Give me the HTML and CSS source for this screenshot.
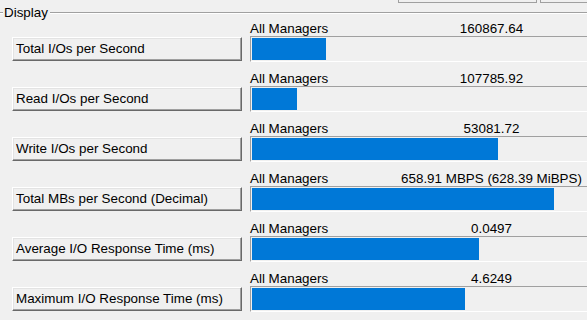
FILE: index.html
```html
<!DOCTYPE html>
<html>
<head>
<meta charset="utf-8">
<link rel="stylesheet" href="styles.css">
</head>
<body>
<div class="topstrip">
  <div class="tbtn tbtn-a"></div>
  <div class="tbtn tbtn-b"></div>
</div>
<div class="group">
  <div class="legend">
    <div class="etch etch-left"></div>
    <span class="legend-text">Display</span>
    <div class="etch etch-right"></div>
  </div>
  <div class="rows">
    <div class="row">
      <div class="btn">Total I/Os per Second</div>
      <div class="meter">
        <div class="caption"><span class="name">All Managers</span><span class="value">160867.64</span></div>
        <div class="bar"><div class="fill" style="width:74px"></div></div>
      </div>
    </div>
    <div class="row">
      <div class="btn">Read I/Os per Second</div>
      <div class="meter">
        <div class="caption"><span class="name">All Managers</span><span class="value">107785.92</span></div>
        <div class="bar"><div class="fill" style="width:45px"></div></div>
      </div>
    </div>
    <div class="row">
      <div class="btn">Write I/Os per Second</div>
      <div class="meter">
        <div class="caption"><span class="name">All Managers</span><span class="value">53081.72</span></div>
        <div class="bar"><div class="fill" style="width:246px"></div></div>
      </div>
    </div>
    <div class="row">
      <div class="btn">Total MBs per Second (Decimal)</div>
      <div class="meter">
        <div class="caption"><span class="name">All Managers</span><span class="value">658.91 MBPS (628.39 MiBPS)</span></div>
        <div class="bar"><div class="fill" style="width:302px"></div></div>
      </div>
    </div>
    <div class="row">
      <div class="btn">Average I/O Response Time (ms)</div>
      <div class="meter">
        <div class="caption"><span class="name">All Managers</span><span class="value">0.0497</span></div>
        <div class="bar"><div class="fill" style="width:227px"></div></div>
      </div>
    </div>
    <div class="row">
      <div class="btn">Maximum I/O Response Time (ms)</div>
      <div class="meter">
        <div class="caption"><span class="name">All Managers</span><span class="value">4.6249</span></div>
        <div class="bar"><div class="fill" style="width:213px"></div></div>
      </div>
    </div>
  </div>
</div>
</body>
</html>
```

FILE: styles.css
```css
html, body {
  margin: 0;
  padding: 0;
  background: #f0f0f0;
  overflow: hidden;
  width: 587px;
  height: 320px;
}
body {
  font-family: "Liberation Sans", Arial, sans-serif;
  font-size: 13.4px;
  color: #000;
}
.topstrip {
  display: flex;
  height: 3px;
  padding-left: 398px;
  gap: 3px;
}
.tbtn {
  height: 2px;
  border: 1px solid #a0a0a0;
  border-top: none;
  background: #f0f0f0;
}
.tbtn-a { width: 137px; }
.tbtn-b { flex: 1; border-right: none; }

.group {
  width: 587px;
}
.legend {
  display: flex;
  align-items: center;
  height: 18px;
}
.etch {
  height: 1px;
  border-top: 1px solid #a0a0a0;
  background: #fff;
  margin-top: 2px;
}
.etch-left { width: 3px; }
.etch-right { flex: 1; }
.legend-text {
  line-height: 15px;
  padding: 0 2px 0 1px;
}

.rows {
  display: flex;
  flex-direction: column;
  gap: 9px;
}
.row {
  display: flex;
  gap: 8px;
  padding-left: 12px;
  height: 41px;
}
.btn {
  box-sizing: border-box;
  width: 230px;
  height: 24px;
  margin-top: 16px;
  display: flex;
  align-items: center;
  padding: 0 0 1px 3px;
  white-space: nowrap;
  background: #f0f0f0;
  border-top: 1px solid #fff;
  border-left: 1px solid #fff;
  border-right: 1px solid #696969;
  border-bottom: 1px solid #696969;
  box-shadow: inset -1px -1px 0 #a0a0a0, inset 1px 1px 0 #e3e3e3;
}
.meter {
  display: flex;
  flex-direction: column;
  flex: 1;
  min-width: 0;
}
.caption {
  display: grid;
  grid-template-columns: 121px 1fr;
  height: 15px;
  line-height: 15px;
  white-space: nowrap;
}
.value {
  text-align: center;
  padding-left: 25px;
}
.bar {
  box-sizing: border-box;
  height: 26px;
  border-top: 1px solid #a0a0a0;
  border-left: 1px solid #a0a0a0;
  border-bottom: 1px solid #fff;
  padding: 1px 0 1px 1px;
  background: #f0f0f0;
}
.fill {
  height: 22px;
  background: #0078d7;
}
```
